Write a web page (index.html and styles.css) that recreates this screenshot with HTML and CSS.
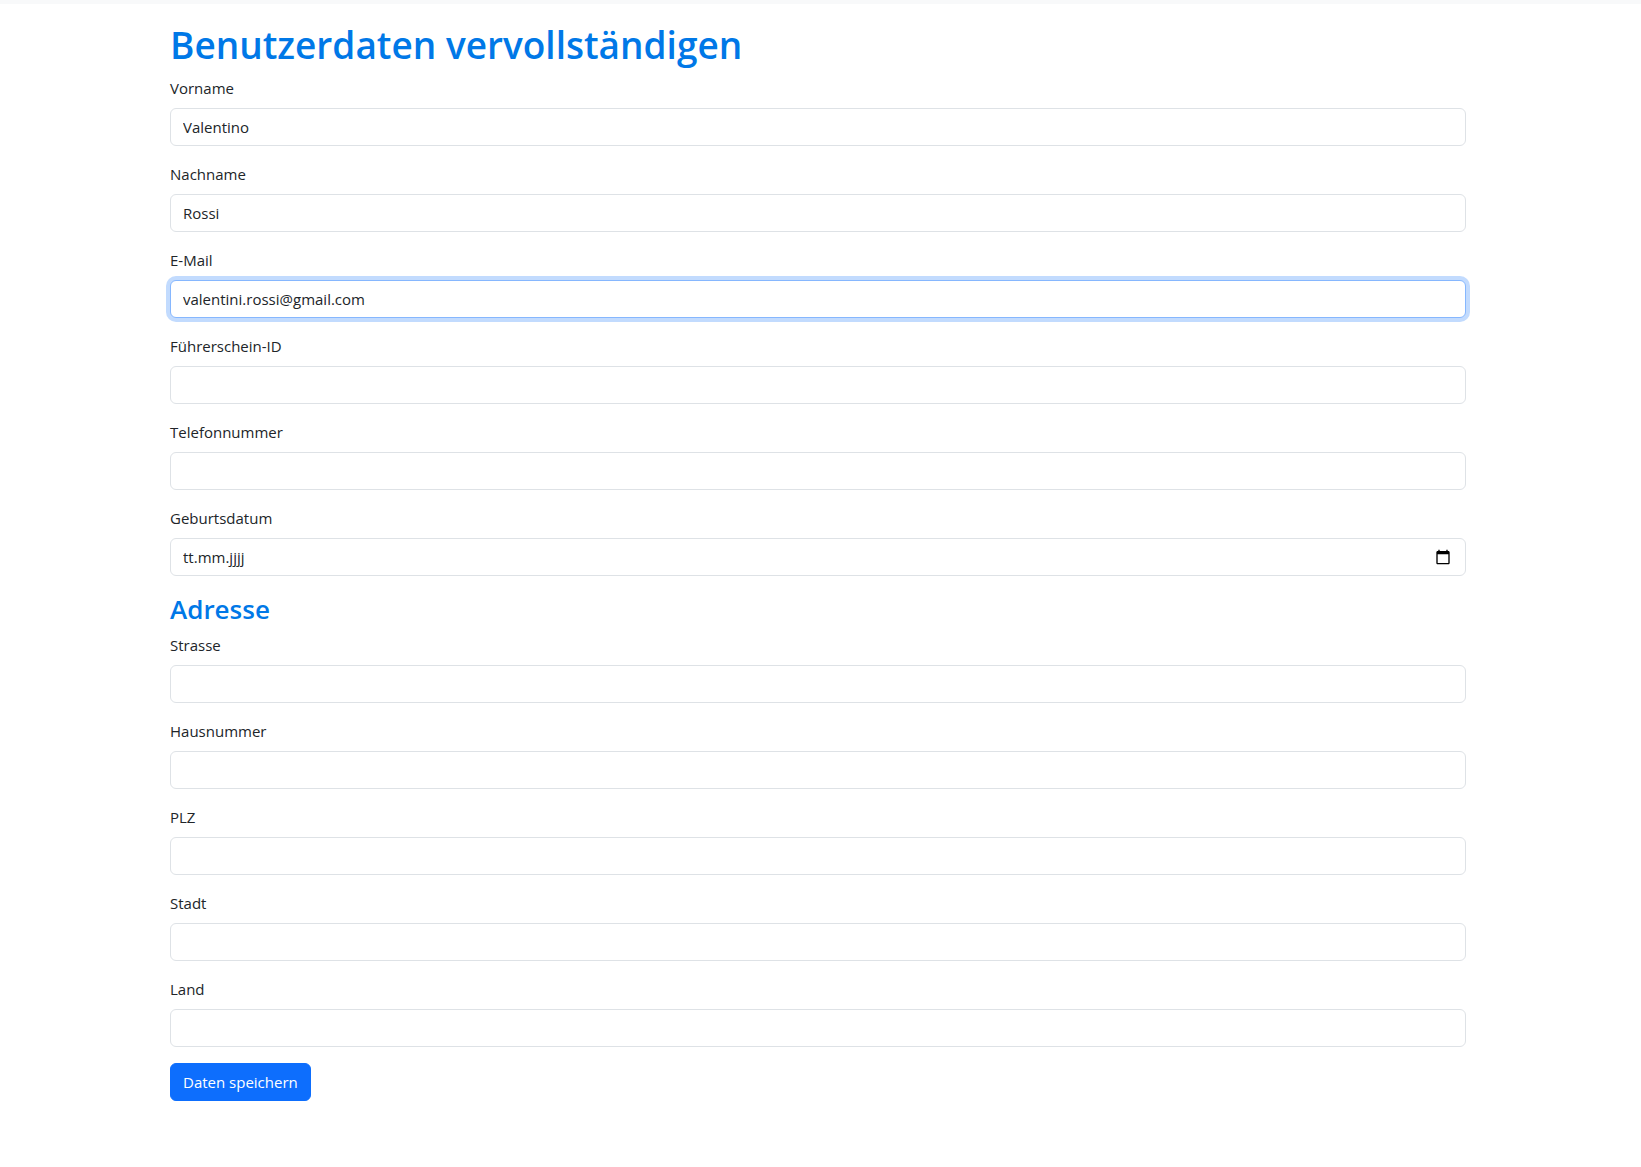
FILE: index.html
```html
<!DOCTYPE html>
<html lang="de">
<head>
  <meta charset="utf-8">
  <meta name="viewport" content="width=device-width, initial-scale=1">
  <title>Benutzerdaten vervollständigen</title>
  <link rel="stylesheet" href="styles.css">
</head>
<body>
  <header class="topbar"></header>
  <main class="page">
    <form class="container">
      <h1 class="title">Benutzerdaten vervollständigen</h1>
      <div class="field">
        <label class="label" for="vorname">Vorname</label>
        <input class="control" id="vorname" type="text" value="Valentino">
      </div>
      <div class="field">
        <label class="label" for="nachname">Nachname</label>
        <input class="control" id="nachname" type="text" value="Rossi">
      </div>
      <div class="field">
        <label class="label" for="email">E-Mail</label>
        <input class="control control-active" id="email" type="email" value="valentini.rossi@gmail.com">
      </div>
      <div class="field">
        <label class="label" for="ausweis">Führerschein-ID</label>
        <input class="control" id="ausweis" type="text">
      </div>
      <div class="field">
        <label class="label" for="telefon">Telefonnummer</label>
        <input class="control" id="telefon" type="tel">
      </div>
      <div class="field">
        <label class="label" for="geburtsdatum">Geburtsdatum</label>
        <div class="control date-control">
          <input class="date-input" id="geburtsdatum" type="text" placeholder="tt.mm.jjjj">
          <button class="date-button" type="button" aria-label="Kalender öffnen">
            <svg class="date-icon" viewBox="0 0 24 24" aria-hidden="true"><path d="M20 3h-1V1h-2v2H7V1H5v2H4c-1.100 0-2 .9-2 2v16c0 1.100.9 2 2 2h16c1.100 0 2-.9 2-2V5c0-1.100-.9-2-2-2zm0 18H4V8h16v13z"/></svg>
          </button>
        </div>
      </div>
      <h2 class="subtitle">Adresse</h2>
      <div class="field">
        <label class="label" for="strasse">Strasse</label>
        <input class="control" id="strasse" type="text">
      </div>
      <div class="field">
        <label class="label" for="hausnummer">Hausnummer</label>
        <input class="control" id="hausnummer" type="text">
      </div>
      <div class="field">
        <label class="label" for="plz">PLZ</label>
        <input class="control" id="plz" type="text">
      </div>
      <div class="field">
        <label class="label" for="stadt">Stadt</label>
        <input class="control" id="stadt" type="text">
      </div>
      <div class="field">
        <label class="label" for="land">Land</label>
        <input class="control" id="land" type="text">
      </div>
      <button class="submit" type="submit">Daten speichern</button>
    </form>
  </main>
</body>
</html>
```
FILE: styles.css
```css
*,
*::before,
*::after {
  box-sizing: border-box;
}

body {
  margin: 0;
  background: #fff;
  color: #212529;
  font-family: "Segoe UI", "Open Sans", "Noto Sans", sans-serif;
  font-size: 15px;
  line-height: 24px;
}

.topbar {
  height: 4px;
  background: #f8f9fa;
}

.page {
  padding: 16px 5px 16px 0;
}

.container {
  max-width: 1320px;
  margin: 0 auto;
  padding: 0 12px;
}

.title,
.subtitle {
  margin: 0 0 6px;
  color: #0078e7;
  font-weight: 600;
}

.title {
  font-size: 37px;
  line-height: 50px;
}

.subtitle {
  font-size: 26px;
  line-height: 35px;
}

.field {
  margin-bottom: 16px;
}

.label {
  display: block;
  margin-bottom: 8px;
}

.control {
  display: block;
  width: 100%;
  height: 38px;
  padding: 6px 12px;
  border: 1px solid #dee2e6;
  border-radius: 6px;
  outline: 0;
  background: #fff;
  color: inherit;
  font: inherit;
}

.control:focus,
.control:focus-within,
.control-active {
  border-color: #86b7fe;
  box-shadow: 0 0 0 4px rgba(13, 110, 253, 0.25);
}

.date-control {
  display: flex;
  align-items: center;
}

.date-input {
  flex: 1;
  min-width: 0;
  padding: 0;
  border: 0;
  outline: 0;
  background: transparent;
  color: inherit;
  font: inherit;
}

.date-input::placeholder {
  color: inherit;
  opacity: 1;
}

.date-button {
  display: flex;
  padding: 2px;
  border: 0;
  background: transparent;
  color: #000;
}

.date-icon {
  width: 16px;
  height: 16px;
  fill: currentColor;
}

.submit {
  display: block;
  padding: 6px 12px;
  border: 1px solid #0d6efd;
  border-radius: 6px;
  background: #0d6efd;
  color: #fff;
  font: inherit;
  cursor: pointer;
}
```
